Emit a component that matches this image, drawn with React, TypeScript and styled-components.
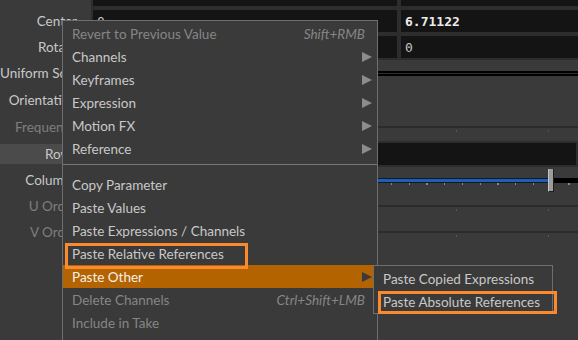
import React from "react";
import styled, { createGlobalStyle } from "styled-components";

type Kind = "vector" | "float" | "menu" | "int" | "field";

interface Parm {
  label: string;
  height: number;
  kind: Kind;
  values?: string[];
  changed?: number;
  disabled?: boolean;
  selected?: boolean;
  fill?: number;
}

interface MenuEntry {
  label: string;
  shortcut?: string;
  disabled?: boolean;
  sub?: boolean;
  active?: boolean;
}

// first row is the tail of the parm above, its label is scrolled away
const parms: Parm[] = [
  { label: "", height: 26, kind: "vector", values: ["", ""] },
  { label: "Center", height: 26, kind: "vector", values: ["0", "6.71122"], changed: 1 },
  { label: "Rotate", height: 26, kind: "vector", values: ["0", "0"] },
  { label: "Uniform Scale", height: 25, kind: "float" },
  { label: "Orientation", height: 29, kind: "menu" },
  { label: "Frequency", height: 26, kind: "int", disabled: true },
  { label: "Rows", height: 27, kind: "field", selected: true },
  { label: "Columns", height: 26, kind: "int", fill: 370 },
  { label: "U Order", height: 26, kind: "int", disabled: true },
  { label: "V Order", height: 26, kind: "int", disabled: true },
];

const topItems: MenuEntry[] = [
  { label: "Revert to Previous Value", shortcut: "Shift+RMB", disabled: true },
  { label: "Channels", sub: true },
  { label: "Keyframes", sub: true },
  { label: "Expression", sub: true },
  { label: "Motion FX", sub: true },
  { label: "Reference", sub: true },
];

const bottomItems: MenuEntry[] = [
  { label: "Copy Parameter" },
  { label: "Paste Values" },
  { label: "Paste Expressions / Channels" },
  { label: "Paste Relative References" },
  { label: "Paste Other", sub: true, active: true },
  { label: "Delete Channels", shortcut: "Ctrl+Shift+LMB", disabled: true },
  { label: "Include in Take", disabled: true },
];

const subItems: MenuEntry[] = [
  { label: "Paste Copied Expressions" },
  { label: "Paste Absolute References" },
];

const GlobalStyle = createGlobalStyle`
  html, body {
    margin: 0;
    padding: 0;
    background: #3a3a3a;
  }
  body {
    font-family: Lato, "Noto Sans", sans-serif;
    overflow: hidden;
  }
`;

const Panel = styled.div`
  position: relative;
  width: 578px;
  height: 340px;
  overflow: hidden;
  background: #3a3a3a;
`;

const ParmList = styled.div`
  display: flex;
  flex-direction: column;
  margin-top: -18px;
`;

const Row = styled.div<{ $h: number }>`
  display: grid;
  grid-template-columns: 91px 1fr;
  align-items: center;
  height: ${(p) => p.$h}px;
`;

const Label = styled.div<{ $disabled?: boolean; $selected?: boolean }>`
  height: 20px;
  line-height: 20px;
  padding-right: 14px;
  text-align: right;
  white-space: nowrap;
  font-size: 13.5px;
  color: ${(p) => (p.$disabled ? "#7e7e7e" : "#c8c8c8")};
  background: ${(p) => (p.$selected ? "#4b4b4b" : "transparent")};
`;

const Fields = styled.div`
  display: flex;
  align-items: center;
  height: 100%;
  min-width: 0;
`;

const ValueField = styled.div<{ $w?: number; $bold?: boolean }>`
  box-sizing: border-box;
  flex: ${(p) => (p.$w ? `0 0 ${p.$w}px` : "1 0 auto")};
  height: 26px;
  padding: 0 4px;
  background: #141414;
  border: 2px solid #2d2d2d;
  display: flex;
  align-items: center;
  font-family: "DejaVu Sans Mono", monospace;
  font-size: 13px;
  font-weight: ${(p) => (p.$bold ? 700 : 400)};
  color: ${(p) => (p.$bold ? "#ececec" : "#c4c4c4")};
`;

const MenuButton = styled.div`
  width: 150px;
  height: 22px;
  background: #4a4a4a;
  border-radius: 2px;
`;

const Slider = styled.div<{ $disabled?: boolean; $step: number }>`
  flex: 1;
  height: 22px;
  margin-left: 7px;
  display: flex;
  align-items: center;
  background-image: repeating-linear-gradient(
    90deg,
    ${(p) => (p.$disabled ? "#575757" : "#8a8a8a")} 0 1px,
    transparent 1px ${(p) => p.$step}px
  );
  background-size: 100% 2px;
  background-position: 0 14px;
  background-repeat: no-repeat;
`;

const SliderFill = styled.div`
  height: 3px;
  background: #1f5fb3;
  border-top: 1px solid #0c1a2c;
  border-bottom: 1px solid #0c1a2c;
`;

const SliderRest = styled.div<{ $disabled?: boolean }>`
  flex: 1;
  height: ${(p) => (p.$disabled ? "2px" : "5px")};
  background: ${(p) => (p.$disabled ? "#2b2b2b" : "#000")};
`;

const FloatTrack = styled.div`
  flex: 1;
  height: 1px;
  margin-left: 7px;
  background: #2e2e2e;
  border-top: 2px solid #000;
  border-bottom: 2px solid #000;
`;

const Handle = styled.div`
  box-sizing: border-box;
  flex: 0 0 6px;
  height: 23px;
  background: #9c9c9c;
  border-left: 1px solid #c4c4c4;
  border-right: 1px solid #1e1e1e;
  border-bottom: 1px solid #1e1e1e;
`;

const Menu = styled.div<{ $left: number; $top: number; $w: number; $bottom?: number }>`
  position: absolute;
  left: ${(p) => p.$left}px;
  top: ${(p) => p.$top}px;
  width: ${(p) => p.$w}px;
  ${(p) => (p.$bottom !== undefined ? `bottom: ${p.$bottom}px;` : "")}
  box-sizing: border-box;
  padding-top: 1px;
  background: #3a3a3a;
  border: 1px solid #6e6e6e;
  display: flex;
  flex-direction: column;
`;

const Item = styled.div<{ $disabled?: boolean; $active?: boolean }>`
  height: 23px;
  padding: 0 12px 0 9px;
  display: flex;
  align-items: center;
  justify-content: space-between;
  white-space: nowrap;
  font-size: 13.5px;
  color: ${(p) => (p.$active ? "#f4f0ea" : p.$disabled ? "#868686" : "#c8c8c8")};
  background: ${(p) => (p.$active ? "#b36400" : "transparent")};
`;

const Shortcut = styled.span`
  font-style: italic;
  color: #868686;
`;

const Arrow = styled.span<{ $active?: boolean }>`
  width: 0;
  height: 0;
  margin-right: -7px;
  border-top: 5px solid transparent;
  border-bottom: 5px solid transparent;
  border-left: 10px solid ${(p) => (p.$active ? "#3a3a3a" : "#8c8c8c")};
`;

const Separator = styled.div`
  height: 1px;
  margin: 4px 0 8px;
  background: #767676;
`;

const Callout = styled.div<{ $left: number; $top: number; $w: number; $h: number }>`
  position: absolute;
  left: ${(p) => p.$left}px;
  top: ${(p) => p.$top}px;
  width: ${(p) => p.$w}px;
  height: ${(p) => p.$h}px;
  box-sizing: border-box;
  border: 3px solid #fb8a2e;
`;

const ParmFields = ({ parm }: { parm: Parm }) => {
  switch (parm.kind) {
    case "vector":
      return (
        <Fields>
          {parm.values!.map((v, i) => (
            <ValueField key={i} $w={308} $bold={parm.changed === i}>
              {v}
            </ValueField>
          ))}
        </Fields>
      );
    case "float":
      return (
        <Fields>
          <ValueField $w={80} />
          <FloatTrack />
        </Fields>
      );
    case "menu":
      return (
        <Fields>
          <MenuButton />
        </Fields>
      );
    case "field":
      return (
        <Fields>
          <ValueField />
        </Fields>
      );
    default:
      return (
        <Fields>
          <ValueField $w={80} />
          <Slider $disabled={parm.disabled} $step={parm.disabled ? 92.6 : 17.75}>
            {parm.fill !== undefined && (
              <>
                <SliderFill style={{ width: parm.fill }} />
                <Handle />
              </>
            )}
            <SliderRest $disabled={parm.disabled} />
          </Slider>
        </Fields>
      );
  }
};

const MenuItem = ({ item }: { item: MenuEntry }) => (
  <Item $disabled={item.disabled} $active={item.active}>
    <span>{item.label}</span>
    {item.shortcut && <Shortcut>{item.shortcut}</Shortcut>}
    {item.sub && <Arrow $active={item.active} />}
  </Item>
);

const App = () => {
  return (
    <Panel>
      <GlobalStyle />
      <ParmList>
        {parms.map((p, i) => (
          <Row key={i} $h={p.height}>
            <Label $disabled={p.disabled} $selected={p.selected}>
              {p.label}
            </Label>
            <ParmFields parm={p} />
          </Row>
        ))}
      </ParmList>

      <Menu $left={62} $top={20} $w={316} $bottom={-20}>
        {topItems.map((it) => (
          <MenuItem key={it.label} item={it} />
        ))}
        <Separator />
        {bottomItems.map((it) => (
          <MenuItem key={it.label} item={it} />
        ))}
      </Menu>

      <Menu $left={373} $top={265} $w={180}>
        {subItems.map((it) => (
          <MenuItem key={it.label} item={it} />
        ))}
      </Menu>

      <Callout $left={65} $top={243} $w={183} $h={26} />
      <Callout $left={378} $top={291} $w={179} $h={23} />
    </Panel>
  );
};

export default App;
